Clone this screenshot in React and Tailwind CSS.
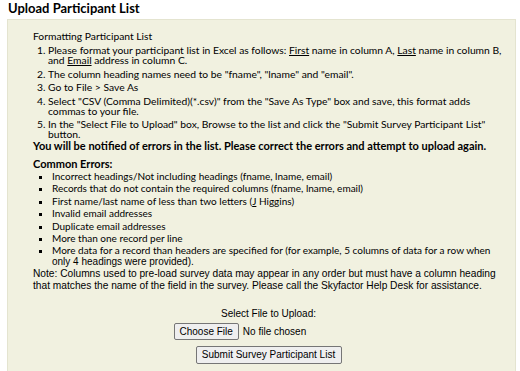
export default function App() {
  const steps = [
    <>Please format your participant list in Excel as follows: <u>First</u> name in column A, <u>Last</u> name in column B, and <u>Email</u> address in column C.</>,
    <>The column heading names need to be "fname", "lname" and "email".</>,
    <>Go to File &gt; Save As</>,
    <>Select "CSV (Comma Delimited)(*.csv)" from the "Save As Type" box and save, this format adds commas to your file.</>,
    <>In the "Select File to Upload" box, Browse to the list and click the "Submit Survey Participant List" button.</>,
  ];
  const errors = [
    <>Incorrect headings/Not including headings (fname, lname, email)</>,
    <>Records that do not contain the required columns (fname, lname, email)</>,
    <>First name/last name of less than two letters (<u>J</u> Higgins)</>,
    <>Invalid email addresses</>,
    <>Duplicate email addresses</>,
    <>More than one record per line</>,
  ];

  return (
    <div className="w-[520px] h-[371px] overflow-hidden bg-white text-black font-['Lato',sans-serif]">
      <h1 className="pl-[8px] text-[13px] leading-[16px] font-bold">Upload Participant List</h1>
      <div className="ml-[7px] w-[509px] mt-[3px] h-[400px] border border-[#e4e4d0] bg-[#f1f1e0] pl-[25px] pr-[11px] pt-[10px] text-[10.3px]">
        <div className="leading-[12px]">Formatting Participant List</div>
        <ol className="list-decimal pl-[15px] mt-[3px] space-y-[3.5px]">
          {steps.map((s, i) => (
            <li key={i} className="leading-[10px]">{s}</li>
          ))}
        </ol>
        <p className="font-bold text-[11px] leading-[12px] mt-[1px]">You will be notified of errors in the list. Please correct the errors and attempt to upload again.</p>
        <p className="font-bold text-[11px] leading-[12px] mt-[6px]">Common Errors:</p>
        <ul className="list-[square] pl-[19px] text-[10px]">
          {errors.map((e, i) => (
            <li key={i} className="leading-[12.4px]">{e}</li>
          ))}
          <li className="leading-[10.5px] mt-[1px]">
            More data for a record than headers are specified for (for example, 5 columns of data for a row when{' '}
            <span className="font-['Liberation_Sans',sans-serif]">only 4 headings were provided).</span>
          </li>
        </ul>
        <p className="font-['Liberation_Sans',sans-serif] text-[10.2px] leading-[11.5px] mt-[1px]">
          Note: Columns used to pre-load survey data may appear in any order but must have a column heading that matches the name of the field in the survey. Please call the Skyfactor Help Desk for assistance.
        </p>
        <div className="flex flex-col items-center font-['Liberation_Sans',sans-serif] text-[10px] mt-[17px]">
          <div className="leading-[12px]">Select File to Upload:</div>
          <div className="flex items-center w-[190px] mt-[3px]">
            <button className="border border-[#767676] rounded-[2px] bg-[#efefef] px-[5px] h-[17px] text-[10px] leading-[15px]">Choose File</button>
            <span className="ml-[4px]">No file chosen</span>
          </div>
          <button className="mt-[6px] border border-[#767676] rounded-[2px] bg-[#efefef] w-[146px] h-[18px] text-[10px] leading-[16px]">Submit Survey Participant List</button>
        </div>
      </div>
    </div>
  );
}
